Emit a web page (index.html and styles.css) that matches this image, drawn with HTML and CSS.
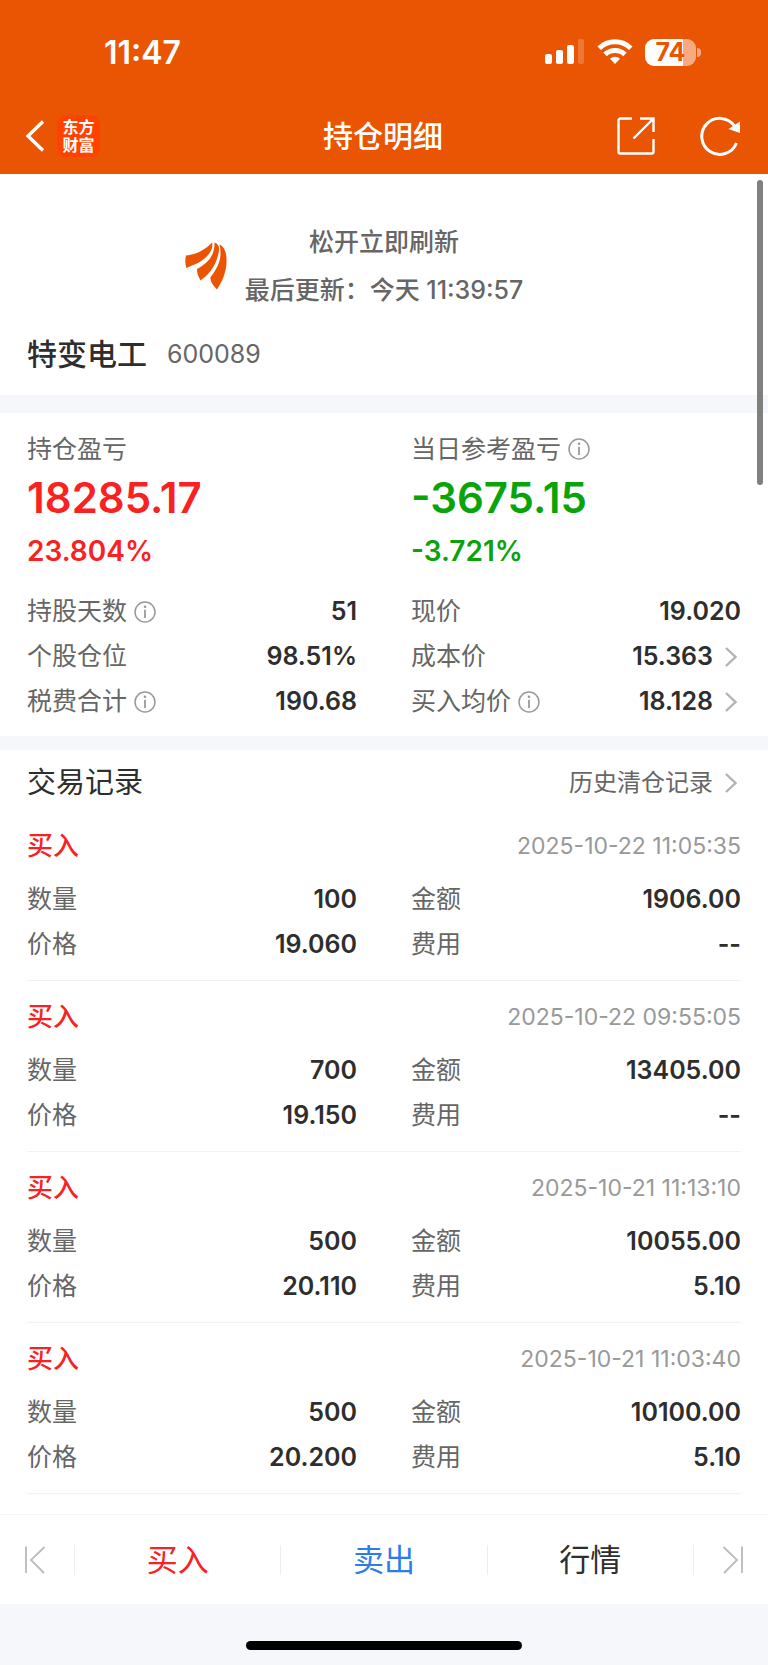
FILE: index.html
```html
<!DOCTYPE html>
<html lang="zh-CN">
<head>
    <meta charset="UTF-8">
    <meta name="viewport" content="width=device-width, initial-scale=1.0">
    <title>持仓明细</title>
    <link rel="stylesheet" href="styles.css">
</head>
<body>
    <!-- shared icons -->
    <svg class="sprite" aria-hidden="true">
        <symbol id="icon-info" viewBox="0 0 22 22">
            <circle cx="11" cy="11" r="10" fill="none" stroke="currentColor" stroke-width="1.5"/>
            <circle cx="11" cy="5.8" r="1.3" fill="currentColor"/>
            <path d="M11 8.8V17" stroke="currentColor" stroke-width="1.8"/>
        </symbol>
        <symbol id="icon-arrow" viewBox="0 0 12 20">
            <path d="M1 1l9.5 9L1 19" fill="none" stroke="currentColor" stroke-width="2.4"/>
        </symbol>
    </svg>

    <header class="header">
        <div class="status-bar">
            <span class="time">11:47</span>
            <div class="status-icons">
                <svg width="40" height="26" viewBox="0 0 40 26" fill="#fff" aria-label="信号">
                    <rect x="0" y="15" width="7" height="10" rx="2"/>
                    <rect x="11" y="11" width="7" height="14" rx="2"/>
                    <rect x="22" y="6" width="7" height="19" rx="2"/>
                    <rect x="33" y="0" width="6" height="25" rx="2" opacity=".2"/>
                </svg>
                <svg width="36" height="26" viewBox="0 0 36 26" aria-label="Wi-Fi">
                    <g fill="none" stroke="#fff" stroke-width="5">
                        <path d="M2.2 9.3A22.5 22.5 0 0 1 33.8 9.3"/>
                        <path d="M8 15.4A14.500 14.500 0 0 1 28 15.4"/>
                    </g>
                    <path d="M18 25l-5-5.2a7.2 7.2 0 0 1 10 0z" fill="#fff"/>
                </svg>
                <div class="battery"><span class="battery-level">74</span></div>
            </div>
        </div>
        <nav class="nav-bar">
            <div class="nav-left">
                <button class="icon-btn" aria-label="返回">
                    <svg width="20" height="32" viewBox="0 0 20 32"><path d="M18 1.5L3 16l15 14.5" fill="none" stroke="#fff" stroke-width="3.4"/></svg>
                </button>
                <a class="app-logo" href="#">东方<br>财富</a>
            </div>
            <h1 class="title">持仓明细</h1>
            <div class="nav-right">
                <button class="icon-btn" aria-label="分享">
                    <svg width="38" height="38" viewBox="0 0 38 38" fill="none" stroke="#fff" stroke-width="2.4">
                        <path d="M15 1.5H3.5a2 2 0 0 0-2 2v31a2 2 0 0 0 2 2h31a2 2 0 0 0 2-2V22"/>
                        <path d="M23 1.5h13.5V15M36 2L16.5 21.5"/>
                    </svg>
                </button>
                <button class="icon-btn" aria-label="刷新">
                    <svg width="41" height="40" viewBox="0 0 41 40">
                        <path d="M36.5 27A18 18 0 1 1 34.5 10" fill="none" stroke="#fff" stroke-width="3"/>
                        <path d="M40 5.5V17l-11.5-4z" fill="#fff"/>
                    </svg>
                </button>
            </div>
        </nav>
    </header>

    <main>
        <div class="scrollbar" aria-hidden="true"></div>

        <section class="stock">
            <div class="pull-refresh">
                <svg class="pull-logo" width="42" height="48" viewBox="0 0 42 48" fill="#ea5504" aria-hidden="true">
                    <path d="M1 13.5C10 13 20 8 27 .5C29 8 22 16 13 21C9 23 5 24 1.5 26C0 22 0 17 1 13.5z"/>
                    <path d="M29.5 .5C33 2 34.5 4 34 8C33 18 28 27 22 33C20 35 18 36.5 15.5 38.5C13 34 12 31 12 27C21 22 30 15 29.5 .5z"/>
                    <path d="M34.5 2.5C40 5 42 12 41.5 21C41 31 37 40 32 47.5C28 43 25 40 25.5 35C32 27 38 17 34.5 2.5z"/>
                </svg>
                <div class="pull-text">
                    <p>松开立即刷新</p>
                    <p>最后更新：今天 11:39:57</p>
                </div>
            </div>
            <div class="stock-name">
                <h2>特变电工</h2>
                <span>600089</span>
            </div>
        </section>

        <section class="summary">
            <div class="columns">
                <div class="profit up">
                    <div class="profit-label">持仓盈亏</div>
                    <div class="profit-value">18285.17</div>
                    <div class="profit-rate">23.804%</div>
                </div>
                <div class="profit down">
                    <div class="profit-label">当日参考盈亏<button class="icon-btn info" aria-label="当日参考盈亏说明"><svg><use href="#icon-info"/></svg></button></div>
                    <div class="profit-value">-3675.15</div>
                    <div class="profit-rate">-3.721%</div>
                </div>
            </div>
            <dl class="columns details">
                <div class="row"><dt>持股天数<button class="icon-btn info" aria-label="持股天数说明"><svg><use href="#icon-info"/></svg></button></dt><dd>51</dd></div>
                <div class="row"><dt>现价</dt><dd>19.020</dd></div>
                <div class="row"><dt>个股仓位</dt><dd>98.51%</dd></div>
                <div class="row"><dt>成本价</dt><dd><a href="#">15.363<svg class="arrow"><use href="#icon-arrow"/></svg></a></dd></div>
                <div class="row"><dt>税费合计<button class="icon-btn info" aria-label="税费合计说明"><svg><use href="#icon-info"/></svg></button></dt><dd>190.68</dd></div>
                <div class="row"><dt>买入均价<button class="icon-btn info" aria-label="买入均价说明"><svg><use href="#icon-info"/></svg></button></dt><dd><a href="#">18.128<svg class="arrow"><use href="#icon-arrow"/></svg></a></dd></div>
            </dl>
        </section>

        <section class="records">
            <div class="records-head">
                <h2>交易记录</h2>
                <a href="#">历史清仓记录<svg class="arrow"><use href="#icon-arrow"/></svg></a>
            </div>

            <article class="record">
                <div class="record-head"><h3>买入</h3><time>2025-10-22 11:05:35</time></div>
                <dl class="columns">
                    <div class="row"><dt>数量</dt><dd>100</dd></div>
                    <div class="row"><dt>金额</dt><dd>1906.00</dd></div>
                    <div class="row"><dt>价格</dt><dd>19.060</dd></div>
                    <div class="row"><dt>费用</dt><dd>--</dd></div>
                </dl>
            </article>

            <article class="record">
                <div class="record-head"><h3>买入</h3><time>2025-10-22 09:55:05</time></div>
                <dl class="columns">
                    <div class="row"><dt>数量</dt><dd>700</dd></div>
                    <div class="row"><dt>金额</dt><dd>13405.00</dd></div>
                    <div class="row"><dt>价格</dt><dd>19.150</dd></div>
                    <div class="row"><dt>费用</dt><dd>--</dd></div>
                </dl>
            </article>

            <article class="record">
                <div class="record-head"><h3>买入</h3><time>2025-10-21 11:13:10</time></div>
                <dl class="columns">
                    <div class="row"><dt>数量</dt><dd>500</dd></div>
                    <div class="row"><dt>金额</dt><dd>10055.00</dd></div>
                    <div class="row"><dt>价格</dt><dd>20.110</dd></div>
                    <div class="row"><dt>费用</dt><dd>5.10</dd></div>
                </dl>
            </article>

            <article class="record">
                <div class="record-head"><h3>买入</h3><time>2025-10-21 11:03:40</time></div>
                <dl class="columns">
                    <div class="row"><dt>数量</dt><dd>500</dd></div>
                    <div class="row"><dt>金额</dt><dd>10100.00</dd></div>
                    <div class="row"><dt>价格</dt><dd>20.200</dd></div>
                    <div class="row"><dt>费用</dt><dd>5.10</dd></div>
                </dl>
            </article>
        </section>
    </main>

    <footer class="footer">
        <div class="tabs">
            <button class="tab-side" aria-label="上一只">
                <svg width="22" height="28" viewBox="0 0 22 28" fill="none" stroke="#bbb" stroke-width="1.8"><path d="M2 .5V27M20.5 1L7 14l13 13"/></svg>
            </button>
            <button class="tab buy">买入</button>
            <button class="tab sell">卖出</button>
            <button class="tab">行情</button>
            <button class="tab-side" aria-label="下一只">
                <svg width="22" height="28" viewBox="0 0 22 28" fill="none" stroke="#bbb" stroke-width="1.8"><path d="M20 .5V27M1.5 1L15 14L2 27"/></svg>
            </button>
        </div>
        <div class="home-indicator"></div>
    </footer>
</body>
</html>
```

FILE: styles.css
```css
* {
    box-sizing: border-box;
    margin: 0;
    padding: 0;
}

body {
    background: #f6f7fa;
    color: #2e2e2e;
    font-family: Inter, "Noto Sans CJK SC", sans-serif;
    font-size: 25px;
}

button {
    border: none;
    background: none;
    font: inherit;
    color: inherit;
    cursor: pointer;
}

a {
    color: inherit;
    text-decoration: none;
}

svg {
    display: block;
}

.sprite {
    position: absolute;
    width: 0;
    height: 0;
}

.icon-btn {
    flex: none;
    display: flex;
}

/* header */
.header {
    background: #ea5504;
    color: #fff;
}

.status-bar {
    display: flex;
    justify-content: space-between;
    align-items: center;
    height: 97px;
    padding: 7px 67px 0 104px;
}

.time {
    font-size: 32px;
    font-weight: 600;
}

.status-icons {
    display: flex;
    align-items: center;
    gap: 12px;
}

.battery {
    display: flex;
    align-items: center;
}

.battery-level {
    width: 51px;
    height: 27px;
    border-radius: 9px;
    background: linear-gradient(90deg, #fff 74%, #f5aa82 74%);
    color: #ea5504;
    font-size: 25px;
    font-weight: 700;
    line-height: 27px;
    text-align: center;
}

.battery::after {
    content: "";
    width: 4px;
    height: 9px;
    margin-left: 1px;
    border-radius: 0 4px 4px 0;
    background: #f5aa82;
}

.nav-bar {
    display: grid;
    grid-template-columns: 1fr auto 1fr;
    align-items: center;
    height: 77px;
    padding: 0 27px 0 25px;
}

.nav-left {
    display: flex;
    align-items: center;
    gap: 12px;
}

.app-logo {
    width: 43px;
    height: 42px;
    padding: 3px 0;
    border-radius: 9px;
    background: #ff4200;
    font-size: 16px;
    font-weight: 700;
    line-height: 18px;
    text-align: center;
}

.title {
    font-size: 30px;
    font-weight: 500;
    line-height: 46px;
}

.nav-right {
    display: flex;
    justify-content: flex-end;
    align-items: center;
    gap: 45px;
}

/* content */
main {
    position: relative;
    background: #fff;
    padding-bottom: 20px;
}

.scrollbar {
    position: absolute;
    top: 6px;
    right: 5px;
    width: 6px;
    height: 305px;
    border-radius: 3px;
    background: #808080;
}

.stock {
    padding: 44px 27px 18px;
}

.pull-refresh {
    display: grid;
    grid-template-columns: 1fr auto 1fr;
    align-items: center;
    gap: 18px;
    color: #666;
    font-weight: 500;
    line-height: 48px;
    text-align: center;
}

.pull-logo {
    justify-self: end;
}

.stock-name {
    display: flex;
    align-items: center;
    gap: 20px;
    padding-top: 17px;
    line-height: 46px;
    color: #666;
}

.stock-name h2 {
    color: #2e2e2e;
    font-size: 30px;
    font-weight: 500;
}

.summary {
    padding: 18px 27px 12px;
    border-top: 18px solid #f6f7fa;
    border-bottom: 14px solid #f6f7fa;
}

.columns {
    display: grid;
    grid-template-columns: 1fr 1fr;
    column-gap: 54px;
}

.profit {
    font-weight: 600;
}

.profit-label {
    display: flex;
    align-items: center;
    color: #666;
    font-weight: 400;
    line-height: 36px;
}

.profit-value {
    font-size: 42px;
    line-height: 62px;
}

.profit-rate {
    font-size: 28px;
    line-height: 44px;
}

.up {
    color: #f82222;
}

.down {
    color: #0aa30a;
}

.info {
    margin-left: 7px;
    color: #999;
}

.info svg {
    width: 22px;
    height: 22px;
}

.details {
    padding-top: 16px;
}

.row {
    display: flex;
    justify-content: space-between;
    align-items: center;
    line-height: 45px;
}

.row dt {
    display: flex;
    align-items: center;
    color: #666;
}

.row dd {
    font-weight: 600;
}

.row a,
.records-head a {
    display: flex;
    align-items: center;
}

.arrow {
    width: 12px;
    height: 20px;
    margin: 0 4px 0 12px;
    color: #b3b3b3;
}

/* trade records */
.records {
    padding: 0 27px;
}

.records-head {
    display: flex;
    justify-content: space-between;
    align-items: center;
    padding-top: 6px;
    line-height: 54px;
}

.records-head h2 {
    font-size: 29px;
    font-weight: 400;
}

.records-head a {
    color: #666;
    font-size: 24px;
}

.record {
    padding: 14px 0 13px;
    border-bottom: 1px solid #f3f3f3;
}

.record-head {
    display: flex;
    justify-content: space-between;
    align-items: center;
    margin-bottom: 9px;
    line-height: 44px;
}

.record-head h3 {
    color: #f82222;
    font-size: 26px;
    font-weight: 500;
}

.record-head time {
    color: #999;
    font-size: 23px;
}

/* bottom bar */
.tabs {
    display: flex;
    align-items: center;
    height: 90px;
    border-top: 1px solid #f6f6f6;
    background: #fff;
}

.tab-side {
    display: flex;
    justify-content: center;
    width: 74px;
    padding-right: 4px;
}

.tab-side:last-child {
    padding: 0 0 0 4px;
}

.tab {
    flex: 1;
    height: 30px;
    border-left: 1px solid #eee;
    font-size: 31px;
    line-height: 30px;
}

.tab:nth-last-child(2) {
    border-right: 1px solid #eee;
}

.buy {
    color: #f82222;
}

.sell {
    color: #2b7de9;
}

.home-indicator {
    width: 36%;
    height: 9px;
    margin: 37px auto 14px;
    border-radius: 5px;
    background: #000;
}
```
